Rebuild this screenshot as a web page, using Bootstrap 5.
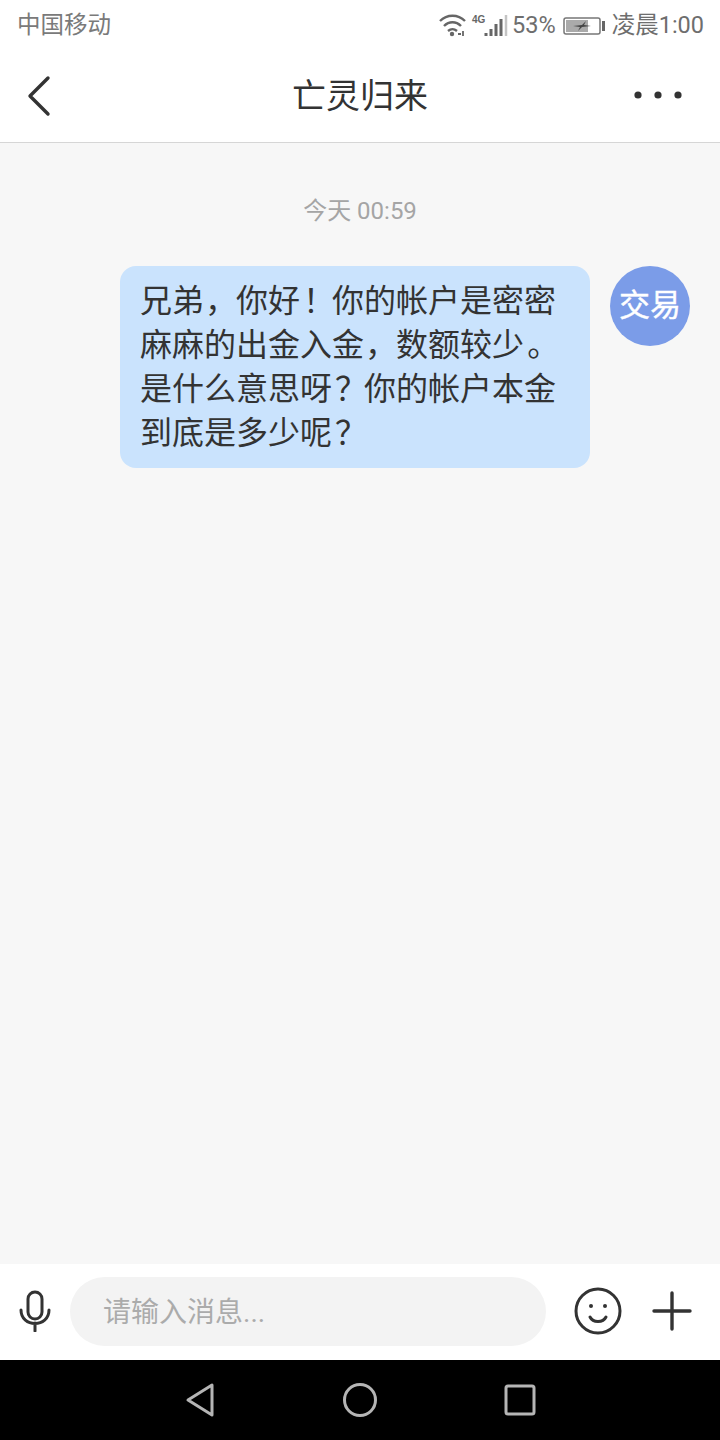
<!DOCTYPE html>
<html lang="zh">
<head>
    <meta charset="UTF-8">
    <meta name="viewport" content="width=device-width, initial-scale=1.0">
    <title>亡灵归来</title>
    <link href="https://cdn.jsdelivr.net/npm/bootstrap@5.3.0/dist/css/bootstrap.min.css" rel="stylesheet">
    <style>
        html, body { height: 100%; }
        body {
            width: 720px;
            height: 1440px;
            overflow: hidden;
            background: #f7f7f7;
            font-family: "Roboto", "Noto Sans CJK SC", sans-serif;
        }
        .phone-status { height: 50px; padding: 2px 16px 0 17px; color: #7a7a7a; font-size: 23.5px; line-height: 1; }
        .status-right { color: #6e6e6e; }
        .status-gap { margin-left: 7px; }
        .title-bar { height: 93px; border-bottom: 1px solid #d6d6d6; }
        .bar-side { width: 100px; }
        .back-wrap { padding-left: 25px; }
        .more-dots { margin: 0 38px 2px 0; }
        .title-text { font-size: 34px; color: #333; line-height: 1; }
        .chat-area { min-height: 0; padding: 0 30px 0 0; }
        .time-label { color: #a5a5a5; font-size: 24px; line-height: 1; padding-top: 56px; padding-bottom: 43px; text-align: center; margin-right: -30px; }
        .msg-bubble { width: 470px; background: #cae3fd; border-radius: 16px; padding: 13px 20px; color: #333; font-size: 32px; line-height: 44px; }
        .zh-punct { display: inline-block; width: 32px; padding-right: 10px; text-align: center; font-feature-settings: "palt"; }
        .msg-avatar { width: 80px; height: 80px; background: #7b9ce8; color: #fff; font-size: 31px; -webkit-text-stroke: .4px #fff; }
        .input-bar { height: 96px; padding: 0 28px 2px 19px; }
        .input-pill { width: 476px; height: 69px; background: #f3f3f3; border-radius: 35px; margin-left: 19px; padding: 4px 0 0 33px; color: #ababab; font-size: 28px; }
        .smile-gap { margin-left: 28px; }
        .plus-gap { margin-left: 30px; }
        .nav-keys { height: 80px; background: #000; }
    </style>
</head>
<body class="d-flex flex-column">

    <div class="phone-status bg-white d-flex justify-content-between align-items-center">
        <span>中国移动</span>
        <div class="status-right d-flex align-items-center">
            <svg width="69" height="26" viewBox="0 0 69 26" fill="none" stroke="#666">
                <path d="M1 8C8 1 19 1 26 8M5 13c5-5 12-5 17 0M9 18c3-2.5 6-2.5 9 0" stroke-width="2.4"/>
                <circle cx="13" cy="21" r="2.2" fill="#666" stroke="none"/>
                <path d="M19 21h3M24 18v5" stroke-width="1.8"/>
                <text x="33" y="10" font-size="10" font-weight="700" fill="#666" stroke="none" font-family="Liberation Sans">4G</text>
                <path d="M47 20v3M52 16v7M57 11v12M62 6v17" stroke-width="3"/>
                <path d="M67 2v21" stroke="#c4c4c4" stroke-width="2.5"/>
            </svg>
            <span class="ms-1">53%</span>
            <svg class="status-gap" width="42" height="20" viewBox="0 0 42 20">
                <rect x="1" y="2" width="36" height="16" rx="2" fill="#fff" stroke="#777" stroke-width="1.5"/>
                <rect x="3" y="4" width="22" height="12" fill="#aaa"/>
                <path d="M10 10l9-1 4-4-2 4 7 1-9 1-4 4 2-4z" fill="#444"/>
                <rect x="39" y="5" width="3" height="10" fill="#666"/>
            </svg>
            <span class="status-gap">凌晨1:00</span>
        </div>
    </div>

    <div class="title-bar bg-white d-flex justify-content-between align-items-center">
        <div class="bar-side back-wrap">
            <svg class="d-block" width="28" height="42" viewBox="0 0 26 42" fill="none" stroke="#333" stroke-width="3.4" stroke-linecap="round" stroke-linejoin="round">
                <path d="M22 3L4 21l18 18"/>
            </svg>
        </div>
        <span class="title-text">亡灵归来</span>
        <div class="bar-side d-flex justify-content-end">
            <svg class="more-dots flex-shrink-0" width="48" height="10" viewBox="0 0 48 10" fill="#333">
                <circle cx="4" cy="5" r="3.6"/><circle cx="24" cy="5" r="3.6"/><circle cx="44" cy="5" r="3.6"/>
            </svg>
        </div>
    </div>

    <div class="chat-area flex-grow-1">
        <div class="time-label">今天 00:59</div>
        <div class="d-flex justify-content-end align-items-start gap-3">
            <div class="msg-bubble me-1">
                <div>兄弟<span class="zh-punct">，</span>你好<span class="zh-punct">！</span>你的帐户是密密</div>
                <div>麻麻的出金入金<span class="zh-punct">，</span>数额较少<span class="zh-punct">。</span></div>
                <div>是什么意思呀<span class="zh-punct">？</span>你的帐户本金</div>
                <div>到底是多少呢<span class="zh-punct">？</span></div>
            </div>
            <div class="msg-avatar rounded-circle d-flex justify-content-center align-items-center flex-shrink-0">交易</div>
        </div>
    </div>

    <div class="input-bar bg-white d-flex align-items-center">
        <svg width="32" height="42" viewBox="0 0 32 42" fill="none" stroke="#333" stroke-width="3" stroke-linecap="round">
            <rect x="9" y="2" width="14" height="27" rx="7"/>
            <path d="M2 20c0 18 28 18 28 0M16 33v8"/>
        </svg>
        <div class="input-pill d-flex align-items-center">请输入消息...</div>
        <svg class="smile-gap" width="48" height="48" viewBox="0 0 48 48" fill="none" stroke="#333" stroke-width="3" stroke-linecap="round">
            <circle cx="24" cy="24" r="22"/>
            <circle cx="17" cy="19" r="2" fill="#333" stroke="none"/><circle cx="31" cy="19" r="2" fill="#333" stroke="none"/>
            <path d="M16 30c3 6 13 6 16 0"/>
        </svg>
        <svg class="plus-gap" width="40" height="40" viewBox="0 0 40 40" stroke="#333" stroke-width="3.4" stroke-linecap="round">
            <path d="M2 20h36M20 2v36"/>
        </svg>
    </div>

    <div class="nav-keys d-flex justify-content-center align-items-center">
        <svg width="400" height="40" viewBox="0 0 400 40" fill="none" stroke="#b5b5b5" stroke-width="3" stroke-linejoin="round">
            <path d="M52 5v30L28 20z"/>
            <circle cx="200" cy="20" r="15.5"/>
            <rect x="346" y="6" width="28" height="28" rx="2"/>
        </svg>
    </div>

    <script src="https://cdn.jsdelivr.net/npm/bootstrap@5.3.0/dist/js/bootstrap.bundle.min.js"></script>
</body>
</html>
